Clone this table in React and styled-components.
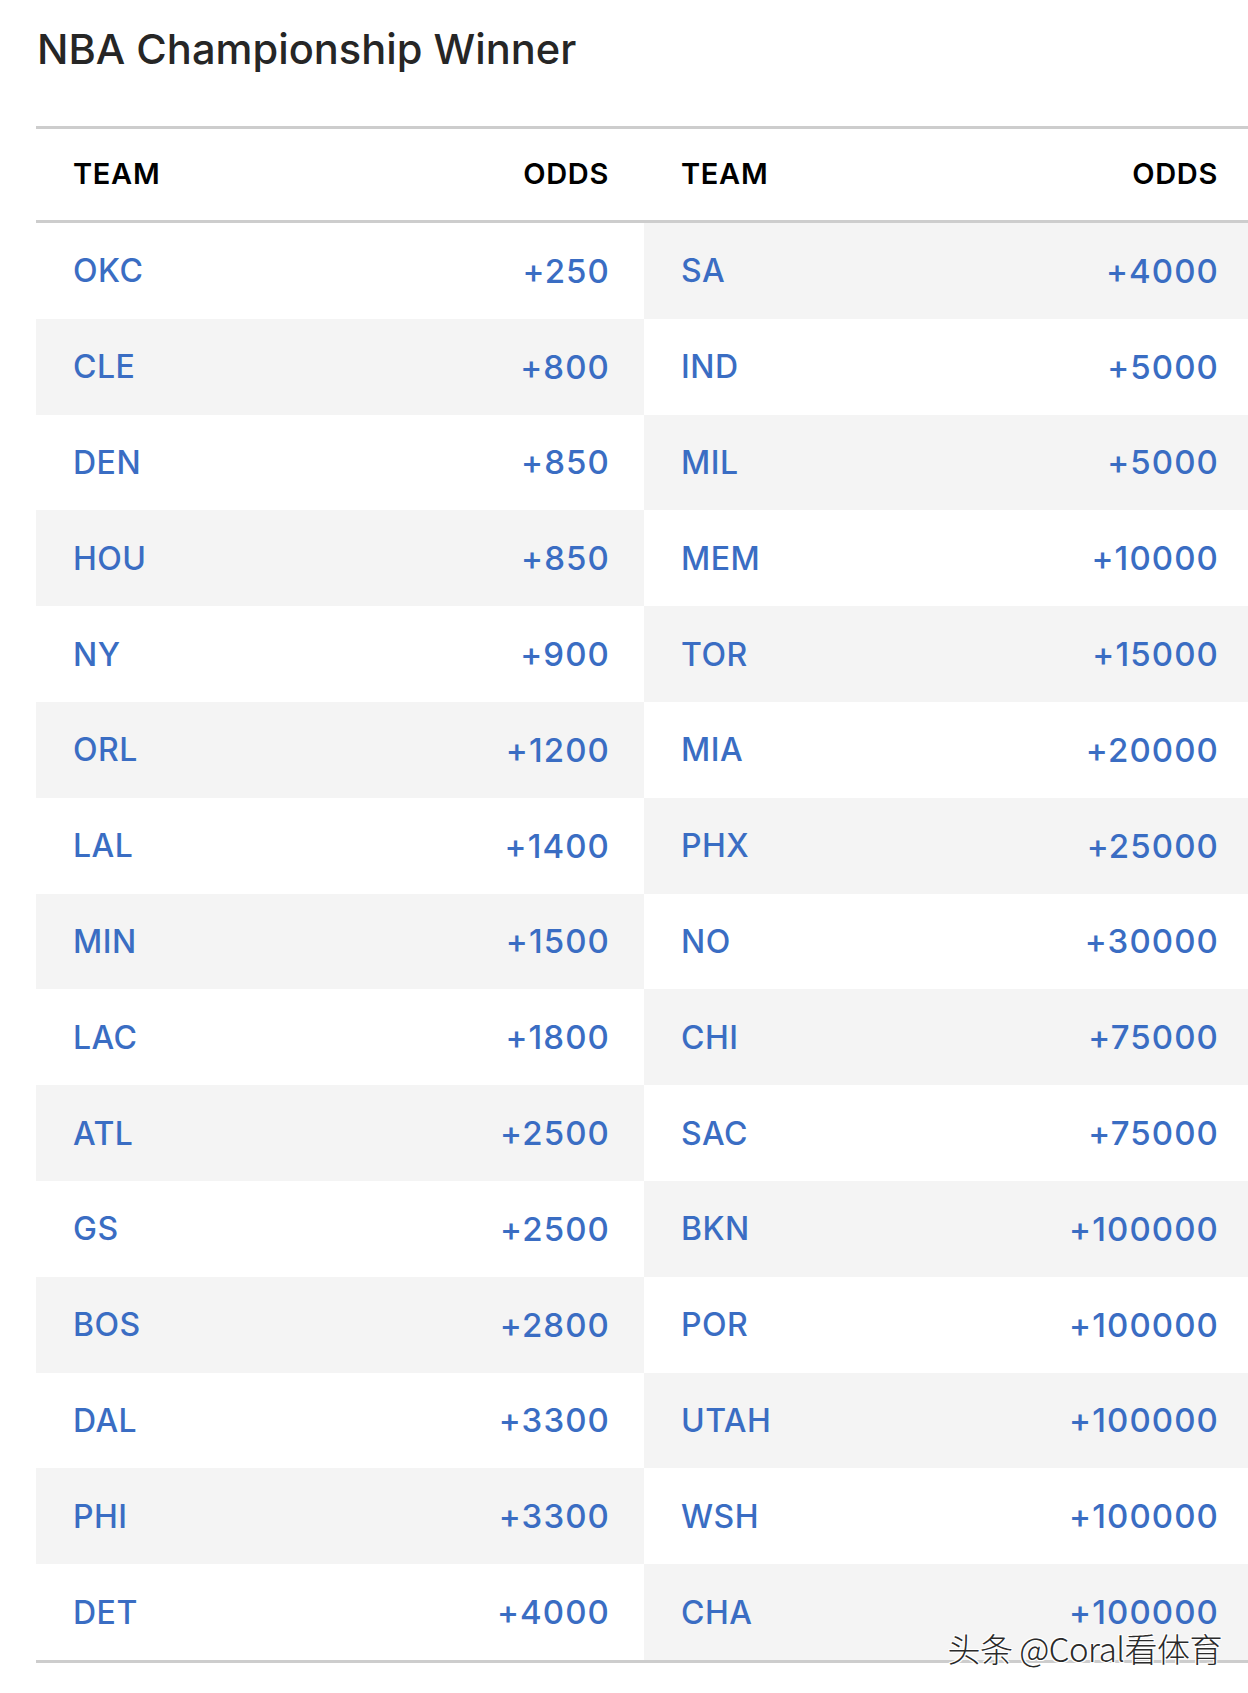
import React from 'react';
import styled, { createGlobalStyle } from 'styled-components';

const GlobalStyle = createGlobalStyle`
  body {
    margin: 0;
    background: #ffffff;
    font-family: Inter, "Liberation Sans", sans-serif;
    overflow-x: hidden;
  }
`;

const Page = styled.div`
  position: relative;
  width: 1248px;
  height: 1693px;
  overflow: hidden;
  padding-left: 36px;
  box-sizing: border-box;
`;

const Title = styled.h1`
  margin: 24px 0 52px 1px;
  font-size: 41.6px;
  font-weight: 500;
  color: #262626;
`;

const Table = styled.div`
  display: grid;
  grid-template-columns: 608px 609px;
  border-top: 3px solid #cdcdcd;
  border-bottom: 3px solid #cdcdcd;
`;

const HeadCell = styled.div`
  display: flex;
  justify-content: space-between;
  align-items: center;
  height: 94px;
  padding: 0 35px 3px 37px;
  box-sizing: border-box;
  font-size: 29px;
  font-weight: 600;
  letter-spacing: 0.7px;
  color: #000;
  border-bottom: 3px solid #cdcdcd;
`;

const Row = styled.div`
  display: flex;
  justify-content: space-between;
  align-items: center;
  height: 95.8px;
  padding: 0 34px 0 37px;
  box-sizing: border-box;
  background: ${(p) => (p.$shade ? '#f4f4f4' : '#ffffff')};
  font-weight: 500;
  color: #3a6dc3;
`;

const Team = styled.span`
  font-size: 32px;
  letter-spacing: 0.5px;
`;

const Odds = styled.span`
  font-size: 33px;
  letter-spacing: 1.1px;
`;

const Watermark = styled.div`
  position: absolute;
  right: 26px;
  top: 1624px;
  font-family: "Noto Sans CJK SC", sans-serif;
  font-size: 33px;
  font-weight: 300;
  letter-spacing: -0.5px;
  color: #2a2a2a;
  text-shadow: 1px 1px 0 #fff, -1px -1px 0 #fff, 1px -1px 0 #fff, -1px 1px 0 #fff;
`;

const left = [
  ['OKC', '+250'], ['CLE', '+800'], ['DEN', '+850'], ['HOU', '+850'],
  ['NY', '+900'], ['ORL', '+1200'], ['LAL', '+1400'], ['MIN', '+1500'],
  ['LAC', '+1800'], ['ATL', '+2500'], ['GS', '+2500'], ['BOS', '+2800'],
  ['DAL', '+3300'], ['PHI', '+3300'], ['DET', '+4000'],
];

const right = [
  ['SA', '+4000'], ['IND', '+5000'], ['MIL', '+5000'], ['MEM', '+10000'],
  ['TOR', '+15000'], ['MIA', '+20000'], ['PHX', '+25000'], ['NO', '+30000'],
  ['CHI', '+75000'], ['SAC', '+75000'], ['BKN', '+100000'], ['POR', '+100000'],
  ['UTAH', '+100000'], ['WSH', '+100000'], ['CHA', '+100000'],
];

const App = () => (
  <Page>
    <GlobalStyle />
    <Title>NBA Championship Winner</Title>
    <Table>
      <HeadCell><span>TEAM</span><span>ODDS</span></HeadCell>
      <HeadCell><span>TEAM</span><span>ODDS</span></HeadCell>
      {left.map((l, i) => (
        <React.Fragment key={l[0]}>
          <Row $shade={i % 2 === 1}><Team>{l[0]}</Team><Odds>{l[1]}</Odds></Row>
          <Row $shade={i % 2 === 0}><Team>{right[i][0]}</Team><Odds>{right[i][1]}</Odds></Row>
        </React.Fragment>
      ))}
    </Table>
    <Watermark>头条 @Coral看体育</Watermark>
  </Page>
);

export default App;
